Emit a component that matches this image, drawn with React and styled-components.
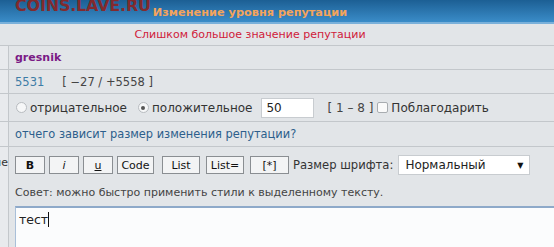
import React from 'react'
import styled, {createGlobalStyle} from 'styled-components'

const Global = createGlobalStyle`
    body {
        margin: 0;
        background: #e2e5e8;
        font-family: "DejaVu Sans", Verdana, sans-serif;
        font-size: 12px;
        color: #333;
        overflow: hidden;
    }
`;

const Page = styled.div`
    width: 554px;
    height: 247px;
    overflow: hidden;
`;

const Header = styled.div`
    position: relative;
    height: 22px;
    border-bottom: 2px solid #79b0da;
    background: linear-gradient(#1c5f94, #3a8cc8);
    display: flex;
    align-items: center;
    justify-content: center;
    padding-right: 54px;
`;

const Watermark = styled.div`
    position: absolute;
    left: 15px;
    top: -4px;
    font-family: "DejaVu Sans", sans-serif;
    font-weight: bold;
    font-size: 16px;
    letter-spacing: -0.2px;
    color: rgba(140, 36, 34, 0.92);
`;

const Title = styled.div`
    font-weight: bold;
    font-size: 11.3px;
    color: #f4a45c;
    padding-top: 2px;
`;

const Notice = styled.div`
    height: 21px;
    border-bottom: 1px solid #c3c7cb;
    display: flex;
    align-items: center;
    justify-content: center;
    padding-right: 54px;
    font-size: 11px;
    color: #d0203a;
`;

const Row = styled.div`
    display: flex;
    height: ${p => p.h}px;
    border-bottom: 1px solid #c3c7cb;
`;

const Label = styled.div`
    width: 8px;
    flex: none;
    border-right: 1px solid #c3c7cb;
    background: #e8eaed;
    display: flex;
    justify-content: flex-end;
    overflow: hidden;
    white-space: nowrap;
    font-size: 11px;
    color: #333;
`;

const Cell = styled.div`
    flex: 1;
    display: flex;
    align-items: center;
    padding-left: 6px;
    white-space: nowrap;
`;

const Name = styled.span`
    font-weight: bold;
    font-size: 11px;
    color: #7a1a85;
`;

const Points = styled.span`
    color: #3d7ca6;
    font-size: 11.5px;
    margin-right: 18px;
`;

const Range = styled.span`
    color: #444;
    font-size: ${p => p.fs || 12}px;
    margin-left: ${p => p.ml || 0}px;
`;

const Choice = styled.label`
    display: flex;
    align-items: center;
    gap: 3px;
    margin-left: ${p => p.ml || 0}px;
    color: #333;
`;

const Radio = styled.span`
    width: 11px;
    height: 11px;
    margin-left: 1px;
    border-radius: 50%;
    border: 1px solid #b8bcc0;
    background: #f6f7f8;
    box-sizing: border-box;
    display: flex;
    align-items: center;
    justify-content: center;
    &::after {
        content: '';
        width: 4px;
        height: 4px;
        border-radius: 50%;
        background: ${p => (p.on ? '#555' : 'transparent')};
    }
`;

const Check = styled.span`
    width: 11px;
    height: 11px;
    border: 1px solid #a8acb0;
    border-radius: 2px;
    background: #fafafa;
    box-sizing: border-box;
`;

const Amount = styled.div`
    width: 53px;
    height: 20px;
    margin-left: 9px;
    box-sizing: border-box;
    border: 1px solid #c8ccd0;
    background: #fff;
    padding-left: 4px;
    display: flex;
    align-items: center;
    font-size: 12px;
    color: #222;
`;

const HelpLink = styled.a`
    color: #2d5f8c;
    font-size: 11.4px;
    text-decoration: none;
`;

const Editor = styled.div`
    flex: 1;
    padding: 8px 0 0 6px;
`;

const Toolbar = styled.div`
    display: flex;
    align-items: center;
    gap: 4px;
    height: 20px;
`;

const Btn = styled.button`
    height: 18px;
    width: ${p => p.w || 30}px;
    margin-left: ${p => p.ml || 0}px;
    padding: 0;
    border: 1px solid #8a8e92;
    background: #f3f4f5;
    font-family: "DejaVu Sans", Verdana, sans-serif;
    font-size: 11px;
    color: #111;
    font-weight: ${p => (p.bold ? 'bold' : 'normal')};
    font-style: ${p => (p.italic ? 'italic' : 'normal')};
    text-decoration: ${p => (p.under ? 'underline' : 'none')};
`;

const SizeLabel = styled.span`
    margin-left: 0;
    font-size: 11.6px;
    color: #333;
`;

const Select = styled.div`
    width: 132px;
    height: 20px;
    box-sizing: border-box;
    margin-left: 1px;
    border: 1px solid #c8ccd0;
    background: #fff;
    display: flex;
    align-items: center;
    justify-content: space-between;
    padding: 0 6px 0 6px;
    color: #222;
    font-size: 12px;
`;

const Arrow = styled.span`
    font-size: 8px;
    color: #111;
`;

const Tip = styled.div`
    margin-top: 11px;
    height: 14px;
    color: #444;
    font-size: 11px;
`;

const TextBox = styled.div`
    margin-top: 6px;
    height: 60px;
    border-top: 2px solid #8ea9c9;
    border-left: 1px solid #a9bfd8;
    background: #fbfcfd;
    padding: 4px 3px;
    font-size: 12.5px;
    color: #222;
`;

const Caret = styled.span`
    display: inline-block;
    width: 1px;
    height: 15px;
    background: #111;
    vertical-align: -3px;
`;

const App = () => {
    return (
        <Page>
            <Global />
            <Header>
                <Watermark>COINS.LAVE.RU</Watermark>
                <Title>Изменение уровня репутации</Title>
            </Header>
            <Notice>Слишком большое значение репутации</Notice>
            <Row h={23}>
                <Label />
                <Cell><Name>gresnik</Name></Cell>
            </Row>
            <Row h={23}>
                <Label />
                <Cell><Points>5531</Points><Range fs={11.5}>[ −27 / +5558 ]</Range></Cell>
            </Row>
            <Row h={27}>
                <Label />
                <Cell>
                    <Choice><Radio />отрицательное</Choice>
                    <Choice ml={10}><Radio on />положительное</Choice>
                    <Amount>50</Amount>
                    <Range ml={13}>[ 1 – 8 ]</Range>
                    <Choice ml={4}><Check />Поблагодарить</Choice>
                </Cell>
            </Row>
            <Row h={24}>
                <Label />
                <Cell><HelpLink href="#">отчего зависит размер изменения репутации?</HelpLink></Cell>
            </Row>
            <Row h={110}>
                <Label><span style={{paddingTop: 9}}>Сообщение</span></Label>
                <Editor>
                    <Toolbar>
                        <Btn bold>B</Btn>
                        <Btn italic>i</Btn>
                        <Btn under>u</Btn>
                        <Btn w={37}>Code</Btn>
                        <Btn w={38} ml={4}>List</Btn>
                        <Btn w={38} ml={2}>List=</Btn>
                        <Btn w={39} ml={2}>[*]</Btn>
                        <SizeLabel>Размер шрифта:</SizeLabel>
                        <Select>Нормальный<Arrow>▼</Arrow></Select>
                    </Toolbar>
                    <Tip>Совет: можно быстро применить стили к выделенному тексту.</Tip>
                    <TextBox>тест<Caret /></TextBox>
                </Editor>
            </Row>
        </Page>
    );
};

export default App
